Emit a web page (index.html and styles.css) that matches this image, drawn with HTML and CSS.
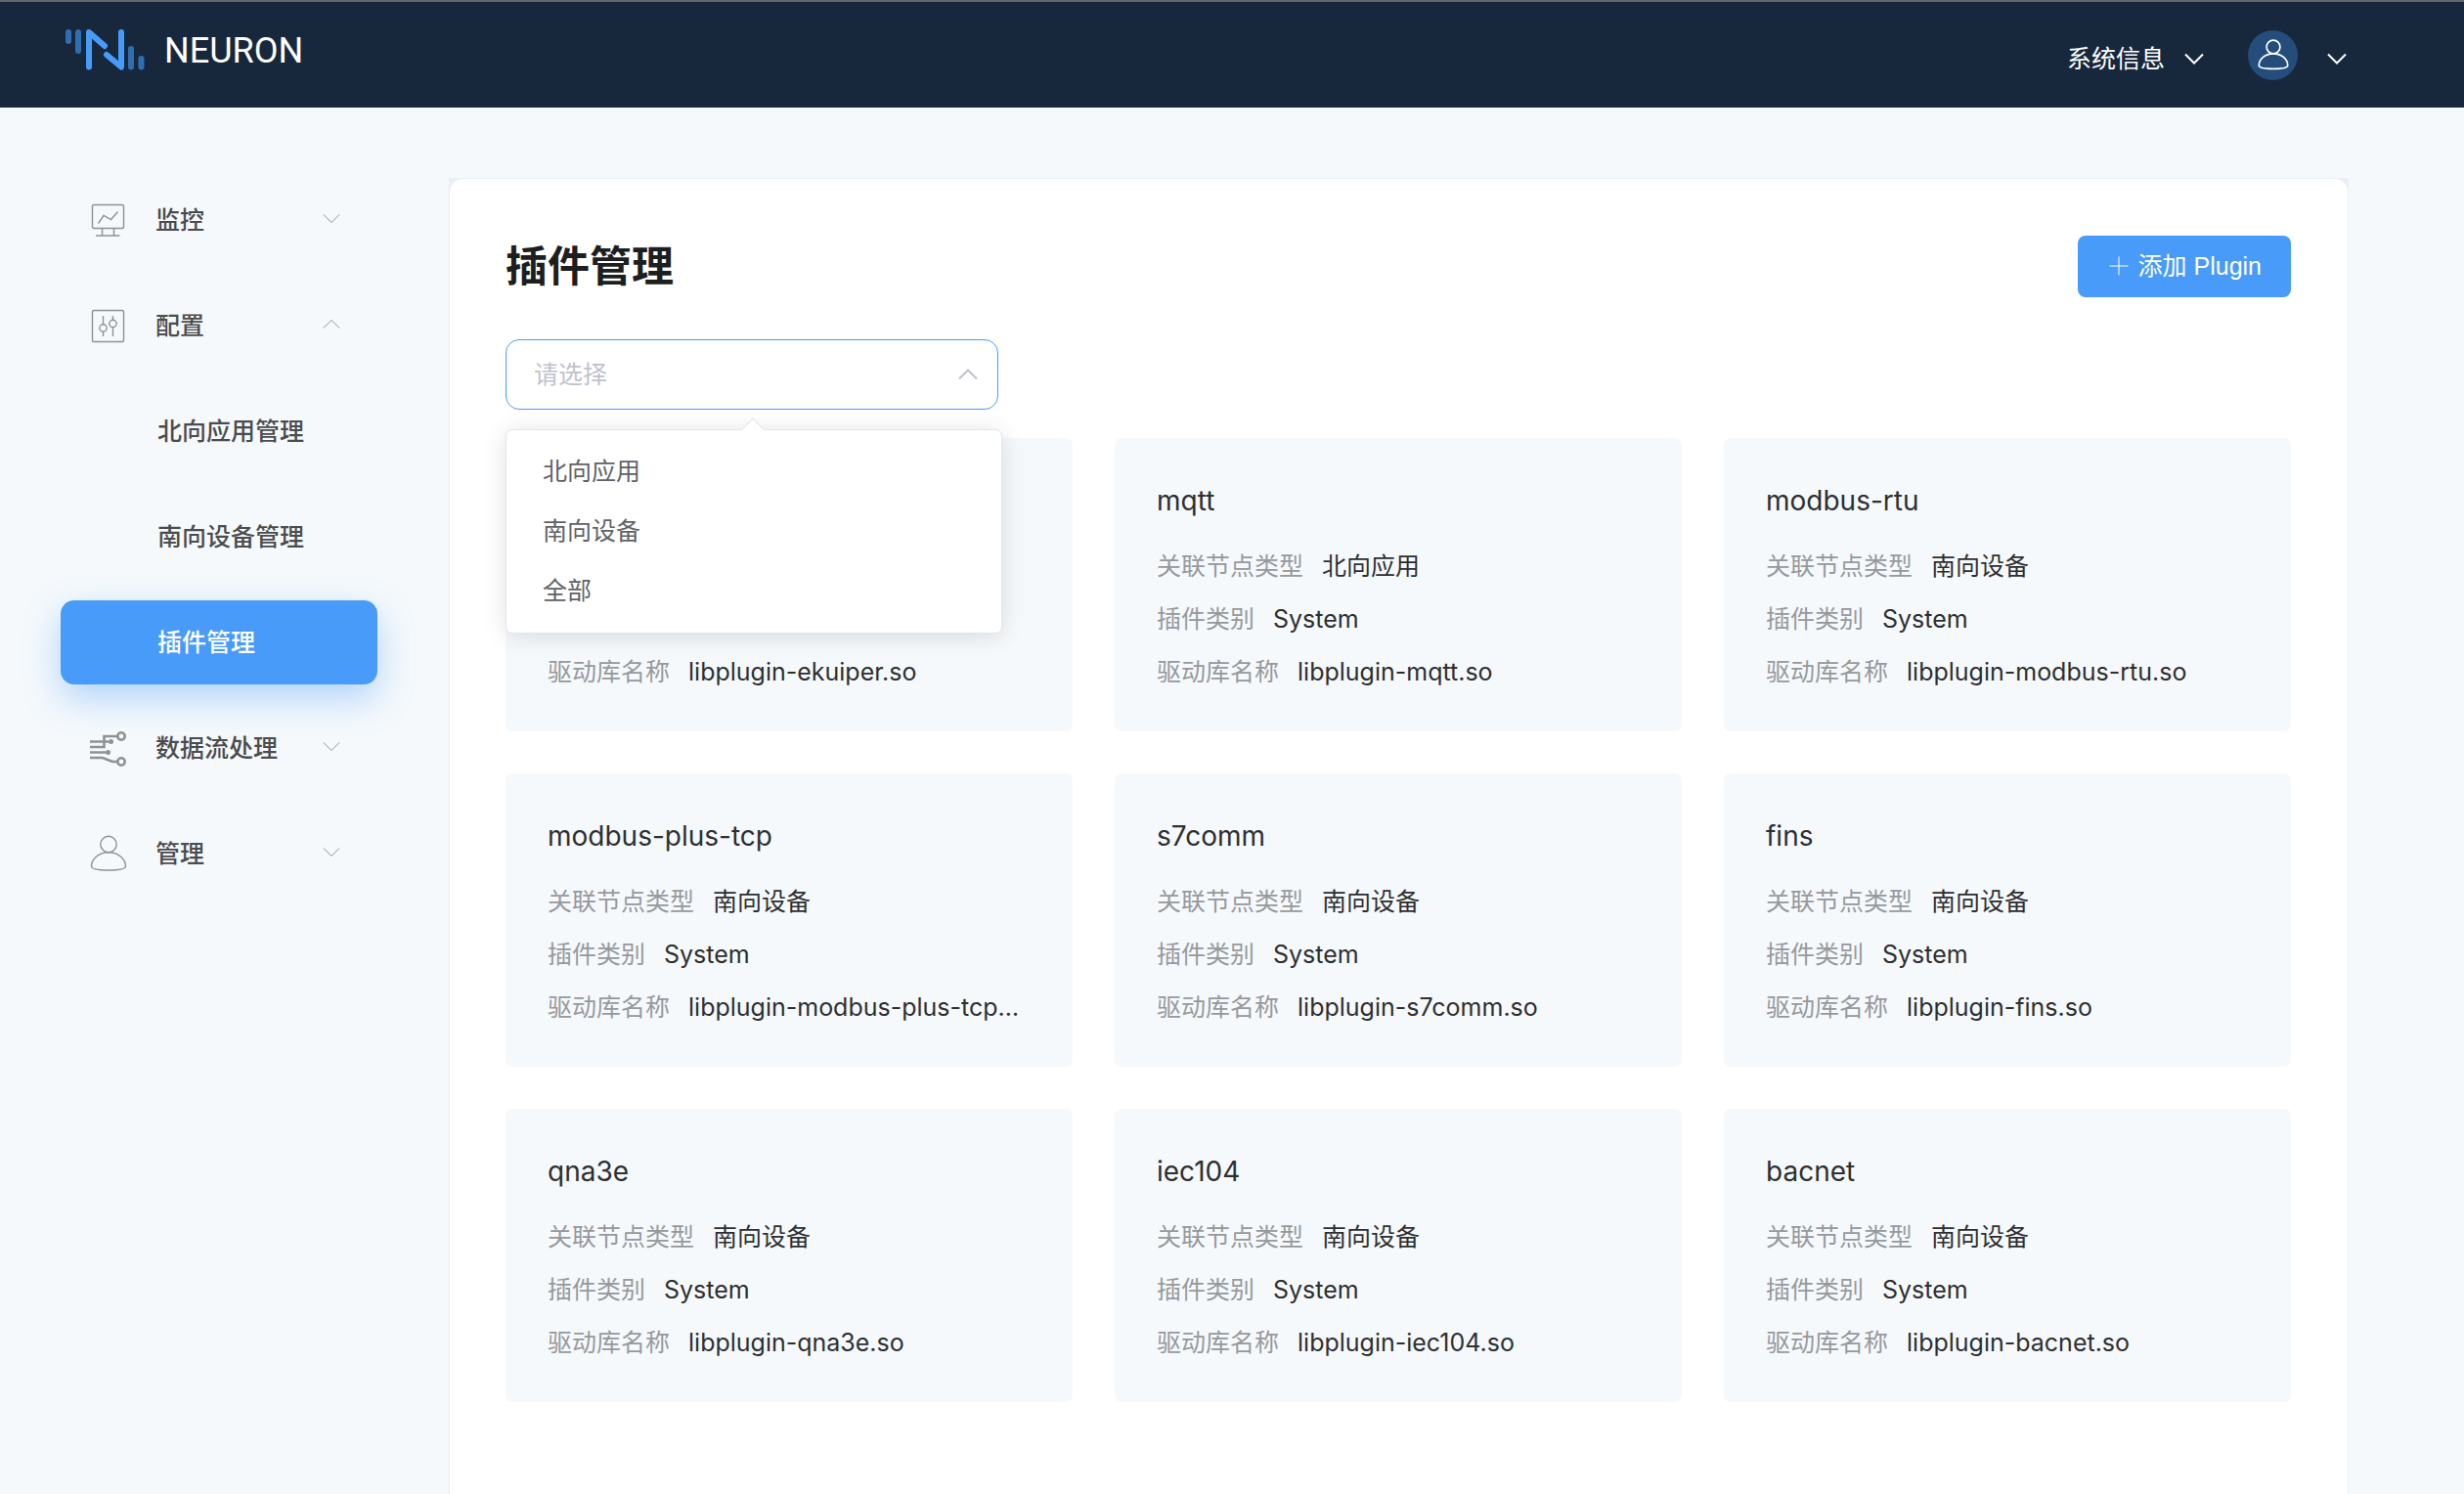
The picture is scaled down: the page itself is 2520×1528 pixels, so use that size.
FILE: index.html
```html
<!DOCTYPE html>
<html lang="zh-CN">
<head>
<meta charset="utf-8">
<title>NEURON</title>
<link rel="stylesheet" href="styles.css">
</head>
<body>
<svg class="sprite" aria-hidden="true">
  <symbol id="down" viewBox="0 0 20 12"><path d="M1 1.500L10 10.500L19 1.500"/></symbol>
  <symbol id="up" viewBox="0 0 20 12"><path d="M1 10.500L10 1.500L19 10.500"/></symbol>
  <symbol id="user" viewBox="0 0 38 38"><circle cx="19" cy="9.500" r="8.200"/><path d="M19 17.700C8.500 17.700 1.500 25 1.500 32C1.500 34.800 10 36 19 36S36.500 34.800 36.500 32C36.500 25 29.500 17.700 19 17.700Z"/></symbol>
</svg>

<header class="topbar">
  <a class="brand" href="#">
    <svg class="logo" viewBox="0 0 82 44" fill="none" stroke-linecap="round" stroke-width="6" aria-hidden="true">
      <g stroke="#306eb2"><path d="M4 4V13M14 4V23M68 21V39.500M78.500 31V39.500"/></g>
      <g stroke="#489bf8"><path d="M25 39.500V4L41 18M43 27L58 39.500V4" stroke-linejoin="round"/></g>
    </svg>
    <span>NEURON</span>
  </a>
  <div class="tools">
    <button class="tool" type="button">系统信息<svg class="chev"><use href="#down"/></svg></button>
    <button class="tool account" type="button" aria-label="用户">
      <span class="avatar"><svg><use href="#user"/></svg></span>
      <svg class="chev"><use href="#down"/></svg>
    </button>
  </div>
</header>

<div class="shell">
  <nav class="side">
    <button class="item" type="button">
      <svg class="icon" viewBox="0 0 38 38" stroke-width="1.4"><rect x="2.500" y="3.500" width="32" height="24" rx="1.500"/><path d="M8.500 22.500L14 14.500L21.500 18.500L28.500 10.500M12.500 27.500V35H24.500V27.500M6 35H30.500"/></svg>
      <span>监控</span><svg class="chev"><use href="#down"/></svg>
    </button>
    <button class="item" type="button" aria-expanded="true">
      <svg class="icon" viewBox="0 0 38 38" stroke-width="1.4"><rect x="2.500" y="3.500" width="32" height="32" rx="1.500"/><circle cx="13.500" cy="21.500" r="3.700"/><circle cx="23.500" cy="17" r="3.700"/><path d="M13.500 9V17.800M13.500 25.200V30M23.500 9V13.300M23.500 20.700V30"/></svg>
      <span>配置</span><svg class="chev"><use href="#up"/></svg>
    </button>
    <a class="item sub" href="#">北向应用管理</a>
    <a class="item sub" href="#">南向设备管理</a>
    <a class="item sub active" href="#" aria-current="page">插件管理</a>
    <button class="item" type="button">
      <svg class="icon" viewBox="0 0 38 38" stroke-width="2.600"><path d="M0 12.500H19M0 18H14.500V7H28M0 23.500H16M0 29H13L23 33H28"/><circle cx="32" cy="7" r="3.700"/><circle cx="32" cy="33" r="3.700"/><circle class="dot" cx="21.500" cy="12.500" r="2.500"/><circle class="dot" cx="18.500" cy="23.500" r="2.500"/></svg>
      <span>数据流处理</span><svg class="chev"><use href="#down"/></svg>
    </button>
    <button class="item" type="button">
      <svg class="icon" stroke-width="1.4"><use href="#user"/></svg>
      <span>管理</span><svg class="chev"><use href="#down"/></svg>
    </button>
  </nav>

  <div class="frame">
    <main class="panel">
      <div class="head">
        <h1>插件管理</h1>
        <button class="add" type="button"><svg viewBox="0 0 20 20"><path d="M10 0.500V19.500M0.500 10H19.500"/></svg>添加 Plugin</button>
      </div>

      <div class="filter">
        <select class="picker" aria-label="关联节点类型">
          <option selected>请选择</option>
          <option>北向应用</option>
          <option>南向设备</option>
          <option>全部</option>
        </select>
        <svg class="chev"><use href="#up"/></svg>
        <ul class="menu" role="listbox" aria-label="关联节点类型">
          <li role="option">北向应用</li>
          <li role="option">南向设备</li>
          <li role="option">全部</li>
        </ul>
      </div>

      <div class="grid">
        <section class="card"><h2>ekuiper</h2><dl>
          <div><dt>关联节点类型</dt><dd>北向应用</dd></div>
          <div><dt>插件类别</dt><dd>System</dd></div>
          <div><dt>驱动库名称</dt><dd>libplugin-ekuiper.so</dd></div></dl></section>
        <section class="card"><h2>mqtt</h2><dl>
          <div><dt>关联节点类型</dt><dd>北向应用</dd></div>
          <div><dt>插件类别</dt><dd>System</dd></div>
          <div><dt>驱动库名称</dt><dd>libplugin-mqtt.so</dd></div></dl></section>
        <section class="card"><h2>modbus-rtu</h2><dl>
          <div><dt>关联节点类型</dt><dd>南向设备</dd></div>
          <div><dt>插件类别</dt><dd>System</dd></div>
          <div><dt>驱动库名称</dt><dd>libplugin-modbus-rtu.so</dd></div></dl></section>
        <section class="card"><h2>modbus-plus-tcp</h2><dl>
          <div><dt>关联节点类型</dt><dd>南向设备</dd></div>
          <div><dt>插件类别</dt><dd>System</dd></div>
          <div><dt>驱动库名称</dt><dd>libplugin-modbus-plus-tcp.so</dd></div></dl></section>
        <section class="card"><h2>s7comm</h2><dl>
          <div><dt>关联节点类型</dt><dd>南向设备</dd></div>
          <div><dt>插件类别</dt><dd>System</dd></div>
          <div><dt>驱动库名称</dt><dd>libplugin-s7comm.so</dd></div></dl></section>
        <section class="card"><h2>fins</h2><dl>
          <div><dt>关联节点类型</dt><dd>南向设备</dd></div>
          <div><dt>插件类别</dt><dd>System</dd></div>
          <div><dt>驱动库名称</dt><dd>libplugin-fins.so</dd></div></dl></section>
        <section class="card"><h2>qna3e</h2><dl>
          <div><dt>关联节点类型</dt><dd>南向设备</dd></div>
          <div><dt>插件类别</dt><dd>System</dd></div>
          <div><dt>驱动库名称</dt><dd>libplugin-qna3e.so</dd></div></dl></section>
        <section class="card"><h2>iec104</h2><dl>
          <div><dt>关联节点类型</dt><dd>南向设备</dd></div>
          <div><dt>插件类别</dt><dd>System</dd></div>
          <div><dt>驱动库名称</dt><dd>libplugin-iec104.so</dd></div></dl></section>
        <section class="card"><h2>bacnet</h2><dl>
          <div><dt>关联节点类型</dt><dd>南向设备</dd></div>
          <div><dt>插件类别</dt><dd>System</dd></div>
          <div><dt>驱动库名称</dt><dd>libplugin-bacnet.so</dd></div></dl></section>
      </div>
    </main>
  </div>
</div>
</body>
</html>
```
FILE: styles.css
```css
* { box-sizing: border-box; }

body {
  margin: 0;
  min-height: 100vh;
  display: flex;
  flex-direction: column;
  background: #f5f9fc;
  color: #2e2f31;
  font: 25px/36px "Liberation Sans", "Noto Sans CJK SC", sans-serif;
}

h1, h2, dl, dd, ul { margin: 0; padding: 0; }
button { border: 0; background: none; font: inherit; color: inherit; cursor: pointer; }
a { color: inherit; text-decoration: none; }
svg { flex: none; fill: none; stroke: currentColor; }
.sprite { position: absolute; width: 0; height: 0; }
.chev { width: 20px; height: 12px; stroke-width: 2px; }

/* top bar */
.topbar {
  display: flex;
  align-items: center;
  justify-content: space-between;
  height: 110px;
  padding: 0 120px 0 66px;
  border-top: 2px solid #66676b;
  background: #17283d;
  color: #fff;
}
.brand {
  display: flex;
  align-items: center;
  gap: 20px;
  padding-bottom: 10px;
  font: 36px/44px Roboto, sans-serif;
}
.brand span { padding-top: 2px; }
.logo { width: 82px; height: 44px; }
.tools { display: flex; align-items: center; gap: 45px; }
.tool { display: flex; align-items: center; gap: 20px; padding: 8px 0 0; }
.account { gap: 30px; padding: 0; }
.account .chev { margin-top: 8px; }
.avatar {
  display: grid;
  place-items: center;
  width: 51px;
  height: 51px;
  border-radius: 50%;
  background: #254d7b;
}
.avatar svg { width: 32px; height: 32px; stroke-width: 2px; }

/* side navigation */
.shell { flex: 1; display: flex; }
.side {
  flex: none;
  width: 459px;
  padding: 72px 73px 0 62px;
  display: flex;
  flex-direction: column;
  gap: 22px;
}
.item {
  display: flex;
  align-items: center;
  gap: 29px;
  height: 86px;
  padding: 0 38px 0 30px;
  border-radius: 14px;
  color: #4b4c4e;
  font-weight: 500;
  text-align: left;
}
.item span { flex: 1; }
.item .chev { width: 18px; height: 11px; margin-bottom: 4px; color: #85878a; stroke-width: 1px; }
.icon { width: 38px; height: 38px; color: #8f9195; }
.dot { fill: currentColor; stroke: none; }
.sub { padding-left: 99px; }
.active {
  background: #489bf8;
  color: #fff;
  box-shadow: 0 14px 36px rgba(72, 155, 248, 0.4);
}

/* content panel */
.frame {
  flex: 1;
  min-width: 0;
  display: flex;
  margin: 72px 118px 0 0;
  padding: 1px 1px 0;
  background: #ebeff4;
}
.panel {
  flex: 1;
  min-width: 0;
  padding: 58px 58px 94px 57px;
  border-radius: 14px 14px 0 0;
  background: #fff;
}
.head { display: flex; align-items: center; justify-content: space-between; height: 63px; }
h1 { font-size: 43px; line-height: 60px; color: #1d1e1f; }
.add {
  display: flex;
  align-items: center;
  gap: 10px;
  height: 63px;
  padding: 0 30px 2px 32px;
  border-radius: 8px;
  background: #489bf8;
  color: #fff;
}
.add svg { width: 20px; height: 20px; }

.filter {
  position: relative;
  display: flex;
  align-items: center;
  width: 504px;
  margin: 43px 0 29px;
}
.picker {
  appearance: none;
  width: 100%;
  height: 72px;
  padding: 0 28px;
  border: 1px solid #489bf8;
  border-radius: 14px;
  outline: 0;
  background: #fff;
  color: #bfc2cb;
  font: inherit;
}
.filter > .chev { position: absolute; right: 21px; color: #bfc2cb; }
.menu {
  position: absolute;
  z-index: 1;
  top: 92px;
  left: 0;
  width: 508px;
  padding: 12px 0;
  border: 1px solid #e3e6ec;
  border-radius: 7px;
  background: #fff;
  box-shadow: 0 3px 24px rgba(0, 0, 0, 0.12);
  color: #606266;
  list-style: none;
}
.menu::before {
  content: "";
  position: absolute;
  top: -9px;
  left: 243px;
  width: 17px;
  height: 17px;
  border: solid #e3e6ec;
  border-width: 1px 0 0 1px;
  background: #fff;
  transform: rotate(45deg);
}
.menu li { padding: 0 37px; line-height: 61px; }

/* plugin cards */
.grid { display: grid; grid-template-columns: repeat(3, minmax(0, 1fr)); gap: 43px; }
.card {
  height: 300px;
  padding: 43px 49px 43px 43px;
  border-radius: 7px;
  background: #f5f9fc;
  font-family: Inter, "Noto Sans CJK SC", sans-serif;
}
h2 { margin-bottom: 18px; font-size: 28px; font-weight: 400; line-height: 43px; }
.card dl div { display: flex; gap: 19px; line-height: 54px; }
dt { flex: none; color: #97999c; }
dd { min-width: 0; overflow: hidden; text-overflow: ellipsis; white-space: nowrap; }
```
